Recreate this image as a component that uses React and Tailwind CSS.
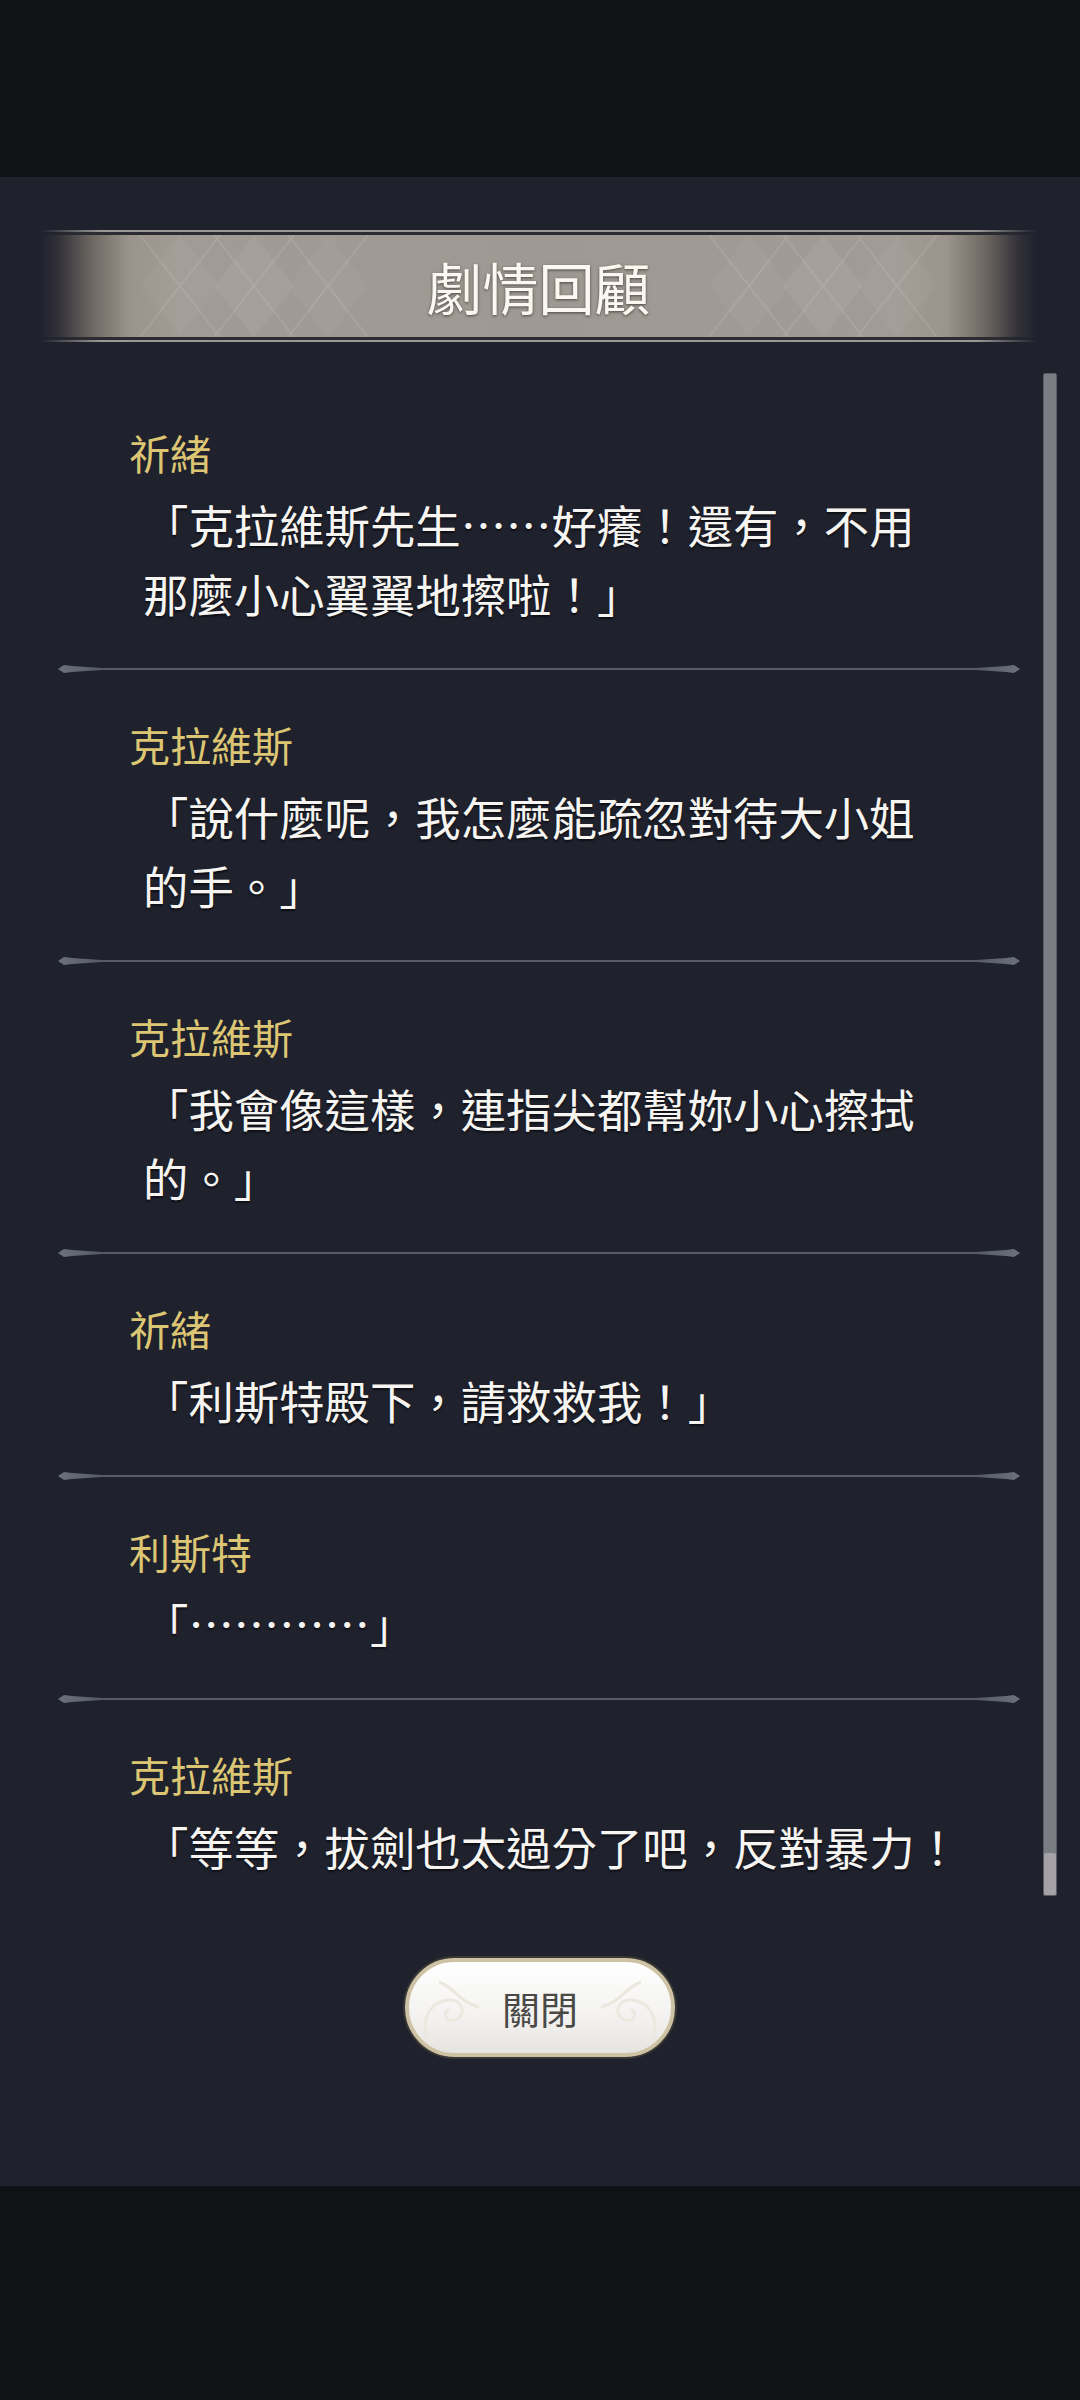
const FONT = '"Noto Sans CJK TC", "Noto Sans CJK SC", sans-serif';

const entries = [
  {name: '祈緒', lines: ['「克拉維斯先生……好癢！還有，不用', '那麼小心翼翼地擦啦！」']},
  {name: '克拉維斯', lines: ['「說什麼呢，我怎麼能疏忽對待大小姐', '的手。」']},
  {name: '克拉維斯', lines: ['「我會像這樣，連指尖都幫妳小心擦拭', '的。」']},
  {name: '祈緒', lines: ['「利斯特殿下，請救救我！」']},
  {name: '利斯特', lines: ['「…………」']},
  {name: '克拉維斯', lines: ['「等等，拔劍也太過分了吧，反對暴力！']},
];

function Divider() {
  return (
    <svg width="962" height="12" viewBox="0 0 962 12" className="ml-[58px] block h-[12px] w-[962px] -my-[4px]">
      <defs>
        <linearGradient id="dl" x1="0" x2="1">
          <stop offset="0" stopColor="#6a707c" />
          <stop offset="1" stopColor="#565b66" />
        </linearGradient>
        <linearGradient id="dr" x1="1" x2="0">
          <stop offset="0" stopColor="#6a707c" />
          <stop offset="1" stopColor="#565b66" />
        </linearGradient>
      </defs>
      <rect x="20" y="5" width="922" height="2" fill="#565b66" />
      <path d="M0 6 L6 2 L14 3 L44 5 L44 7 L14 9 L6 10 Z" fill="url(#dl)" />
      <path d="M962 6 L956 2 L948 3 L918 5 L918 7 L948 9 L956 10 Z" fill="url(#dr)" />
    </svg>
  );
}

function Banner() {
  return (
    <div className="ml-[40px] w-[997px]">
      <div className="h-[2px] bg-[linear-gradient(to_right,transparent,#9a9794_6%,#9a9794_94%,transparent)]" />
      <div className="h-[3px] bg-[linear-gradient(to_right,transparent,#2b2b31_4%,#2b2b31_96%,transparent)]" />
      <div className="relative flex h-[102px] items-center justify-center overflow-hidden bg-[linear-gradient(to_right,#1f212d_0%,#34323a_2%,#6a655f_5%,#9a948c_9%,#a19b95_14%,#9f9993_50%,#a19b95_86%,#9a948c_91%,#6a655f_95%,#34323a_98%,#1f212d_100%)]">
        <svg className="absolute left-0 top-0" width="997" height="102" viewBox="0 0 997 102">
          <g fill="#ffffff">
            <path d="M140 0 L180 51 L140 102 L100 51 Z" opacity="0.03" />
            <path d="M214 0 L254 51 L214 102 L174 51 Z" opacity="0.06" />
            <path d="M288 0 L328 51 L288 102 L248 51 Z" opacity="0.03" />
            <path d="M857 0 L897 51 L857 102 L817 51 Z" opacity="0.03" />
            <path d="M783 0 L823 51 L783 102 L743 51 Z" opacity="0.06" />
            <path d="M709 0 L749 51 L709 102 L669 51 Z" opacity="0.03" />
          </g>
          <g stroke="#ffffff" strokeWidth="2" opacity="0.09">
            <path d="M174 0 L254 102 M254 0 L174 102 M100 0 L180 102 M180 0 L100 102 M248 0 L328 102 M328 0 L248 102" />
            <path d="M743 0 L823 102 M823 0 L743 102 M669 0 L749 102 M749 0 L669 102 M817 0 L897 102 M897 0 L817 102" />
          </g>
        </svg>
        <span
          className="relative text-[56px] leading-none text-[#fbf8f1] [text-shadow:0_1px_3px_rgba(40,35,30,0.7)]"
          style={{fontFamily: FONT}}
        >劇情回顧</span>
      </div>
      <div className="h-[3px] bg-[linear-gradient(to_right,transparent,#2b2b31_4%,#2b2b31_96%,transparent)]" />
      <div className="h-[2px] bg-[linear-gradient(to_right,transparent,#9a9794_6%,#9a9794_94%,transparent)]" />
    </div>
  );
}

function Entry({entry}) {
  return (
    <div className="pt-[43px] pb-[39px]">
      <div className="ml-[129px] h-[60px] text-[41px] leading-[60px] text-[#dcc674] whitespace-nowrap">
        {entry.name}
      </div>
      <div className="mt-[8px] ml-[143px] text-[45.4px] leading-[69px] text-[#f6f5f2] [text-shadow:0_2px_2px_rgba(0,0,0,0.55)]">
        {entry.lines.map((l, i) => (
          <div key={i} className="whitespace-nowrap">{l}</div>
        ))}
      </div>
    </div>
  );
}

export default function App() {
  return (
    <div className="flex h-[2400px] w-[1080px] flex-col bg-[#111216]" style={{fontFamily: FONT}}>
      <div className="h-[177px] shrink-0" />
      <div className="flex h-[2009px] shrink-0 flex-col bg-[#1f212d]">
        <div className="pt-[53px]">
          <Banner />
        </div>
        <div className="mt-[31px] flex h-[1523px]">
          <div className="flex-1 overflow-hidden pt-[6px]">
            {entries.map((e, i) => (
              <div key={i}>
                {i > 0 && <Divider />}
                <Entry entry={e} />
              </div>
            ))}
          </div>
          <div className="mr-[23px] flex w-[14px] flex-col rounded-[2px] border border-[#5b5d64] bg-[#7b7d84]">
            <div className="flex-1" />
            <div className="h-[42px] rounded-[2px] bg-[#a4a2a6]" />
          </div>
        </div>
        <div className="mt-[62px] flex justify-center">
          <button className="relative flex h-[99px] w-[270px] items-center justify-center overflow-hidden rounded-full border-[4px] border-[#cdc2a4] bg-[linear-gradient(to_bottom,#ffffff,#f3f2f0_60%,#e6e4e0)] shadow-[0_0_0_2px_#3a3834]">
            <svg className="absolute left-0 top-0" width="262" height="91" viewBox="0 0 262 91" fill="none" stroke="#ece8df" strokeWidth="3">
              <path d="M20 80 C10 60 20 40 40 38 C55 37 58 55 45 58 C36 60 34 50 40 48" />
              <path d="M30 20 C45 25 50 40 70 45" />
              <path d="M242 80 C252 60 242 40 222 38 C207 37 204 55 217 58 C226 60 228 50 222 48" />
              <path d="M232 20 C217 25 212 40 192 45" />
            </svg>
            <span className="relative text-[38px] text-[#4a4946]">關閉</span>
          </button>
        </div>
      </div>
    </div>
  );
}
